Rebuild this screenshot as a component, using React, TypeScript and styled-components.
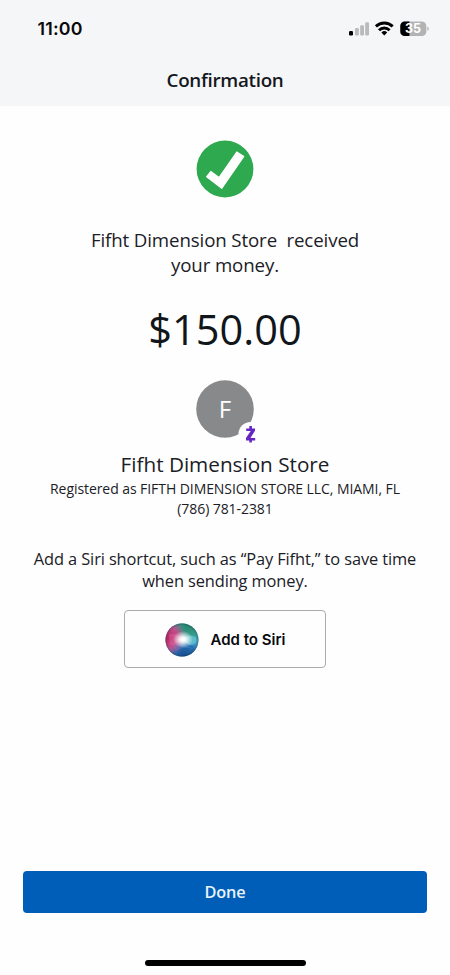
import React from "react";
import styled, { createGlobalStyle } from "styled-components";

const GlobalStyle = createGlobalStyle`
  * { box-sizing: border-box; }
  body { margin: 0; background: #fefefe; }
`;

const Screen = styled.div`
  width: 450px;
  height: 975px;
  display: flex;
  flex-direction: column;
  background: #fefefe;
  color: #1b2026;
  font-family: "Open Sans", "Noto Sans", sans-serif;
  overflow: hidden;
`;

const Header = styled.header`
  height: 106px;
  flex: none;
  background: #f5f6f8;
`;

const StatusBar = styled.div`
  height: 58px;
  display: flex;
  align-items: center;
  justify-content: space-between;
  padding: 0 20px 0 37.5px;
`;

const Clock = styled.span`
  font: 600 17.8px/22px Inter, sans-serif;
  letter-spacing: 0.2px;
  color: #08090b;
`;

const Title = styled.h1`
  margin: 8px 0 0;
  text-align: center;
  font-size: 18.8px;
  font-weight: 600;
  line-height: 28px;
  letter-spacing: -0.28px;
  color: #14181d;
  font-variant-ligatures: none;
`;

const Content = styled.main`
  flex: 1;
  display: flex;
  flex-direction: column;
  align-items: center;
  text-align: center;
`;

const SuccessIcon = styled.svg`
  margin-top: 34px;
  flex: none;
`;

const Message = styled.p`
  margin: 29px 0 0;
  font-size: 18.7px;
  line-height: 25px;
  letter-spacing: -0.12px;
  white-space: pre;
`;

const Amount = styled.div`
  margin-top: 22px;
  font-size: 41.5px;
  line-height: 60px;
  color: #11161b;
`;

const Avatar = styled.svg`
  margin-top: 21px;
  flex: none;
`;

const PayeeName = styled.h2`
  margin: 3px 0 0;
  font-size: 20.7px;
  font-weight: 400;
  line-height: 30px;
`;

const PayeeDetail = styled.div`
  font-size: 14px;
  line-height: 20px;
  letter-spacing: -0.07px;
  white-space: nowrap;
`;

const SiriHint = styled.p`
  margin: 29px 0 0;
  font-size: 16.4px;
  line-height: 22px;
  letter-spacing: -0.11px;
  white-space: pre;
`;

const SiriButton = styled.button`
  width: 202px;
  height: 58px;
  flex: none;
  margin-top: 18px;
  padding: 1px 0 0;
  display: flex;
  align-items: center;
  justify-content: center;
  gap: 12px;
  background: #fefefe;
  border: 1px solid #aaabad;
  border-radius: 4px;
  color: #08090b;
  font: 600 15px/20px Inter, sans-serif;
`;

const Footer = styled.footer`
  height: 105px;
  flex: none;
  display: flex;
  flex-direction: column;
  align-items: center;
`;

const DoneButton = styled.button`
  width: 404px;
  height: 42px;
  margin-top: 1px;
  padding: 0;
  border: 0;
  border-radius: 4px;
  background: #005eb8;
  color: #e9f4fc;
  font: 600 16.3px/24px "Open Sans", sans-serif;
  letter-spacing: -0.1px;
`;

const HomeIndicator = styled.div`
  width: 161px;
  height: 6px;
  margin-top: 47px;
  border-radius: 3px;
  background: #000;
`;

const StatusIcons = () => (
  <svg width="82" height="20" viewBox="348 19 82 20">
    <g fill="#b9babc">
      <rect x="355" y="28" width="3.8" height="7.4" rx="1.2" />
      <rect x="360.2" y="25.2" width="3.8" height="10.2" rx="1.2" />
      <rect x="365.2" y="22.2" width="3.8" height="13.2" rx="1.2" />
    </g>
    <rect x="349" y="31" width="4" height="4.4" rx="1.2" fill="#000" />
    <g fill="none" stroke="#000" strokeWidth="2.9">
      <path d="M375.9 26.4a12 12 0 0 1 16.8 0" />
      <path d="M379 30.2a7.5 7.5 0 0 1 10.6 0" />
    </g>
    <path d="M381.4 32.5a4.1 4.1 0 0 1 5.8 0l-2.9 2.9z" fill="#000" />
    <rect x="400.3" y="21.5" width="26" height="14.6" rx="4.4" fill="#b2b3b5" />
    <path d="M404.7 21.5h4.7v14.6h-4.7a4.4 4.4 0 0 1-4.4-4.4v-5.8a4.4 4.4 0 0 1 4.4-4.4z" fill="#000" />
    <path d="M427.3 26.8q1.6.6 1.6 2t-1.6 2z" fill="#b2b3b5" />
    <text x="413" y="33.3" textAnchor="middle" fill="#fff" fontFamily="Inter, sans-serif" fontSize="12.5" fontWeight="700">35</text>
  </svg>
);

const SiriOrb = () => (
  <svg width="34" height="34" viewBox="0 0 34 34">
    <defs>
      <radialGradient id="pink" cx="0.05" cy="0.42" r="0.58">
        <stop offset="0" stopColor="#b82360" />
        <stop offset="0.55" stopColor="#d04586" stopOpacity="0.9" />
        <stop offset="1" stopColor="#cb4585" stopOpacity="0" />
      </radialGradient>
      <radialGradient id="green" cx="0.68" cy="0.05" r="0.6">
        <stop offset="0" stopColor="#24846c" />
        <stop offset="0.6" stopColor="#359c86" stopOpacity="0.85" />
        <stop offset="1" stopColor="#35a090" stopOpacity="0" />
      </radialGradient>
      <radialGradient id="blue" cx="0.58" cy="1" r="0.6">
        <stop offset="0" stopColor="#144b8e" />
        <stop offset="0.6" stopColor="#2468ae" stopOpacity="0.9" />
        <stop offset="1" stopColor="#3183c3" stopOpacity="0" />
      </radialGradient>
      <radialGradient id="glow" cx="0.5" cy="0.5" r="0.5">
        <stop offset="0" stopColor="#fff" />
        <stop offset="0.3" stopColor="#fff" stopOpacity="0.9" />
        <stop offset="1" stopColor="#fff" stopOpacity="0" />
      </radialGradient>
      <radialGradient id="rim" cx="0.5" cy="0.5" r="0.5">
        <stop offset="0.86" stopColor="#26243f" stopOpacity="0" />
        <stop offset="1" stopColor="#26243f" stopOpacity="0.35" />
      </radialGradient>
    </defs>
    <circle cx="17" cy="17" r="16.5" fill="#4aa8c4" />
    <circle cx="17" cy="17" r="16.5" fill="url(#blue)" />
    <circle cx="17" cy="17" r="16.5" fill="url(#green)" />
    <circle cx="17" cy="17" r="16.5" fill="url(#pink)" />
    <path d="M4 12C9 9 13 12 18 17c-5 2-9 7-13 5z" fill="#ee80b0" opacity="0.3" />
    <path d="M17 17c4-5 11-6 14-2 1 5-3 8-7 7z" fill="#75d5e7" opacity="0.55" />
    <path d="M8 23c5-4 12-4 20 3-7-2-13-1-17 2z" fill="#73a9e5" opacity="0.2" />
    <ellipse cx="18" cy="16.5" rx="10" ry="8.5" fill="url(#glow)" />
    <circle cx="17" cy="17" r="16.5" fill="url(#rim)" />
  </svg>
);

export default function App() {
  return (
    <Screen>
      <GlobalStyle />
      <Header>
        <StatusBar>
          <Clock>11:00</Clock>
          <StatusIcons />
        </StatusBar>
        <Title>Confirmation</Title>
      </Header>
      <Content>
        <SuccessIcon width="58" height="58" viewBox="196 140 58 58">
          <circle cx="225" cy="169" r="28.4" fill="#2ea94f" />
          <path
            d="M206.7 176.7 210.8 171.5 219 177.5 236.8 152 243.8 156.5 221.7 188.3Z"
            fill="#fff"
            stroke="#fff"
            strokeWidth="1.2"
            strokeLinejoin="round"
          />
        </SuccessIcon>
        <Message>{"Fifht Dimension Store  received\nyour money."}</Message>
        <Amount>$150.00</Amount>
        <Avatar width="66" height="66" viewBox="192 380 66 66">
          <circle cx="225" cy="409" r="28.8" fill="#88898b" />
          <circle cx="250.5" cy="434" r="12" fill="#fefefe" />
          <text x="225" y="417.8" textAnchor="middle" fill="#fff" fontFamily="Open Sans, sans-serif" fontSize="24">F</text>
          <path
            d="M246.2 428.4H255v2.4l-4.6 7.2h4.8v2.5h-9.2v-2.4l4.7-7.2h-4.5zM249.3 426h2.6v3h-2.6zM249.3 440h2.6v2.4h-2.6z"
            fill="#6425c2"
          />
        </Avatar>
        <PayeeName>Fifht Dimension Store</PayeeName>
        <PayeeDetail>Registered as FIFTH DIMENSION STORE LLC, MIAMI, FL</PayeeDetail>
        <PayeeDetail>(786) 781-2381</PayeeDetail>
        <SiriHint>{"Add a Siri shortcut, such as “Pay Fifht,” to save time\nwhen sending money."}</SiriHint>
        <SiriButton>
          <SiriOrb />
          Add to Siri
        </SiriButton>
      </Content>
      <Footer>
        <DoneButton>Done</DoneButton>
        <HomeIndicator />
      </Footer>
    </Screen>
  );
}
